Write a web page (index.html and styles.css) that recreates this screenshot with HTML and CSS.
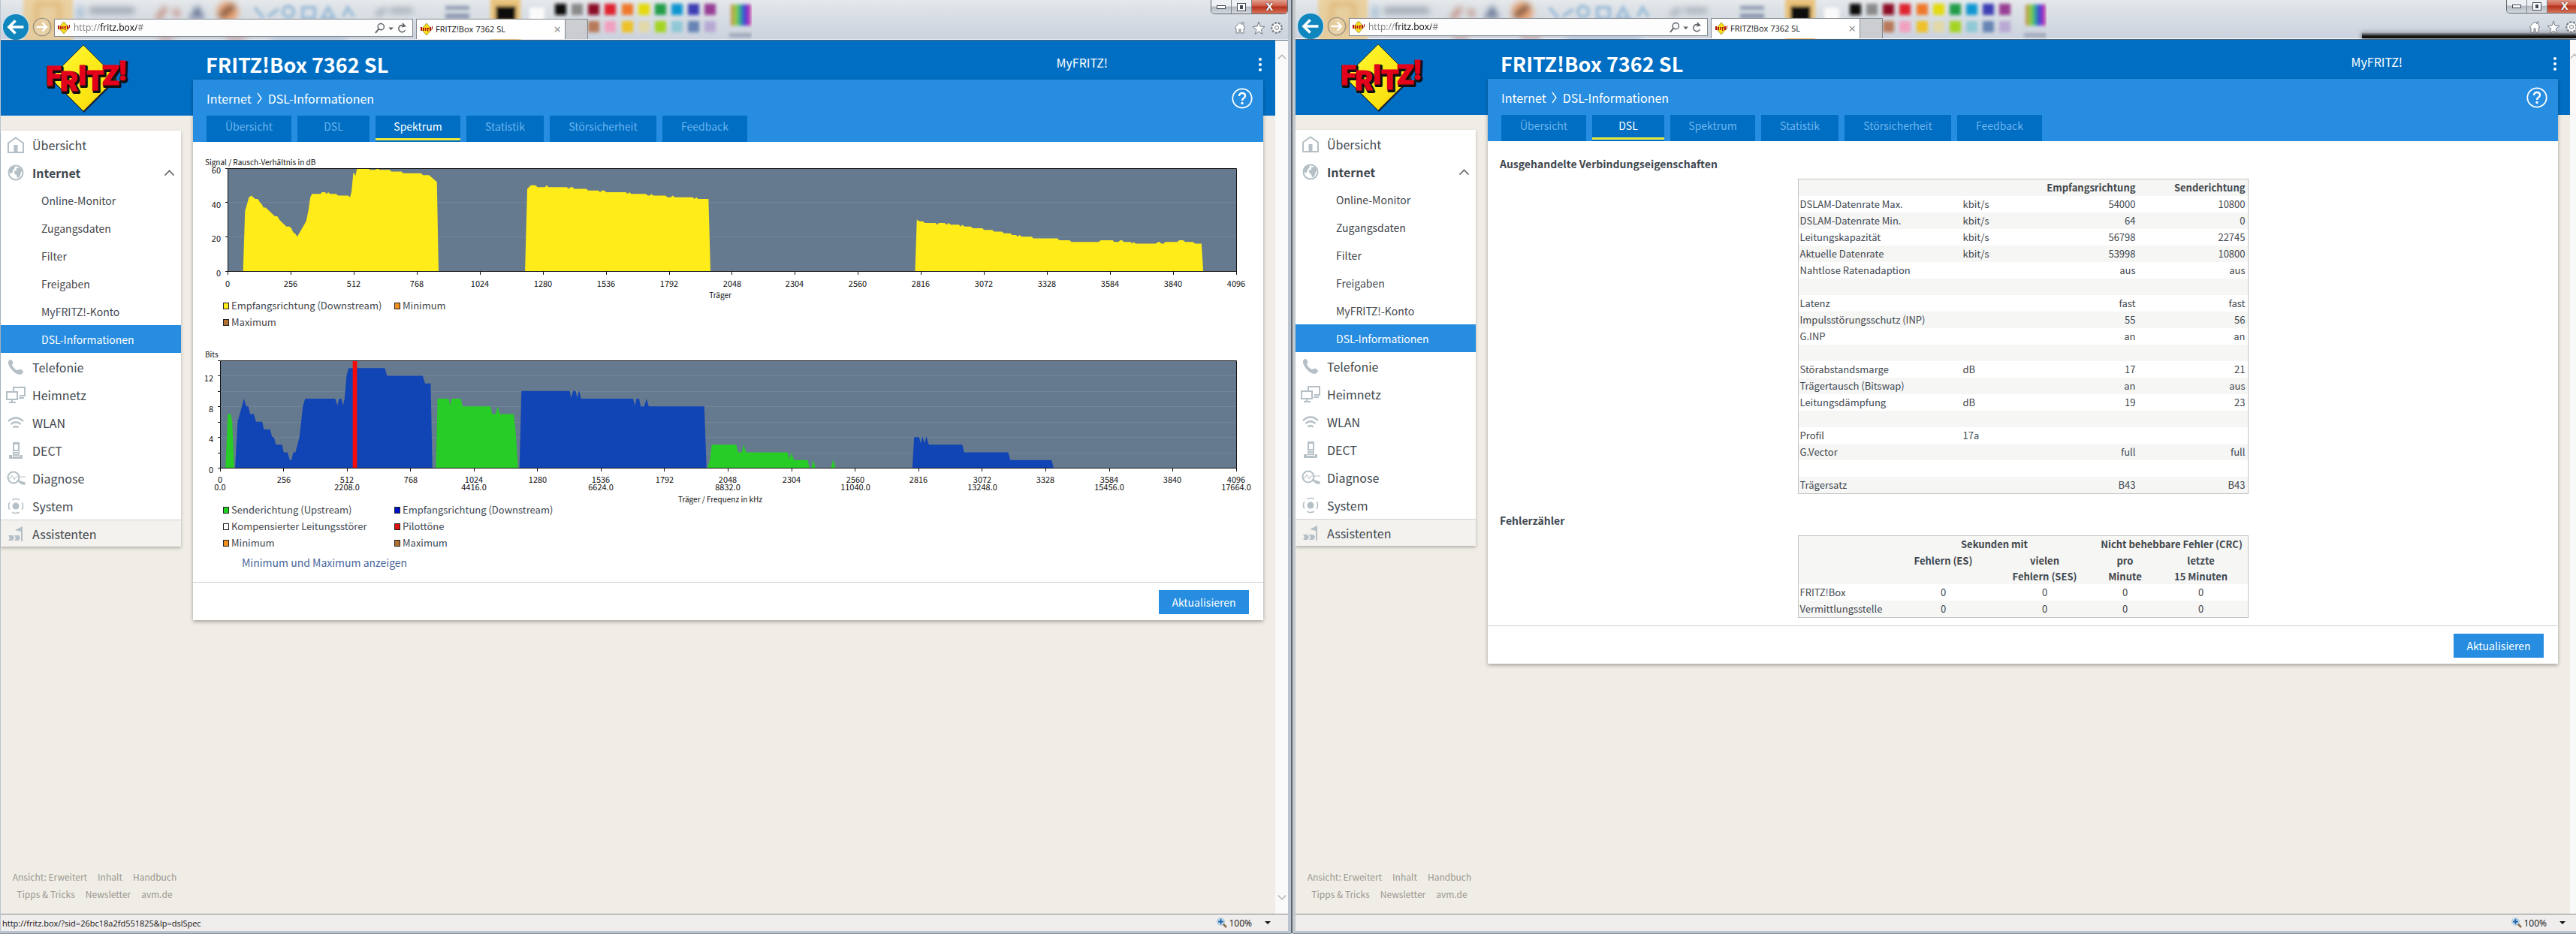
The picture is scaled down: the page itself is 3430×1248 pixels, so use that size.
FILE: index.html
```html
<!DOCTYPE html>
<html lang="de">
<head>
<meta charset="utf-8">
<title>FRITZ!Box 7362 SL</title>
<link rel="stylesheet" href="styles.css">
</head>
<body>
<svg class="defs" aria-hidden="true">
  <defs>
    <linearGradient id="gold" x1="0" y1="0" x2="1" y2="1"><stop offset="0" stop-color="#fff9a0"/><stop offset=".3" stop-color="#fdf023"/><stop offset=".7" stop-color="#fbe312"/><stop offset="1" stop-color="#f0a31a"/></linearGradient>
    <linearGradient id="rainbow"><stop offset="0" stop-color="#d08a50"/><stop offset=".25" stop-color="#8fd040"/><stop offset=".45" stop-color="#30b090"/><stop offset=".7" stop-color="#4038e0"/><stop offset="1" stop-color="#e040a0"/></linearGradient>
    <filter id="soft" x="-10%" y="-50%" width="120%" height="200%"><feGaussianBlur stdDeviation="2"/></filter>
    <filter id="softer" x="-10%" y="-50%" width="120%" height="200%"><feGaussianBlur stdDeviation="4"/></filter>
  </defs>
  <symbol id="i-fav" viewBox="0 0 16 16"><path d="M8 0 15 8 8 16 1 8Z" fill="#f8e01c" stroke="#7a6410" stroke-width=".6"/><path d="M0 5h2v5H0zM3 6h2v4H3zM6 6h1.500v4H6zM8.500 6h2.500v1.500h-.7V11H9V7.500h-.5zM12 5h2v5h-2zM15 4h1v4h-1z" fill="#b3121a"/></symbol>
  <symbol id="i-house" viewBox="0 0 28 24"><path d="M4 22V9.500L14 2.500 24 9.500V22Z" fill="none" stroke="#b4c0c6" stroke-width="2"/><path d="M11.500 12h5v9h-5z" fill="#b4c0c6"/></symbol>
  <symbol id="i-globe" viewBox="0 0 28 24"><circle cx="14" cy="12" r="9.500" fill="none" stroke="#b4c0c6" stroke-width="2"/><path d="M6 5c3-2 6-2 7 0-1 3-3 3-3 5s-2 2-2 4l-3-3c0-2 0-4 1-6M15 6l5-1 3 5c-1 1-2 0-2 2l-2 6-3 1c-1-3 0-4-3-5-2-3-1-5 2-5z" fill="#b4c0c6"/></symbol>
  <symbol id="i-phone" viewBox="0 0 28 24"><path d="M5 3c2-2 4-1 5 2s-1 3-1 4c1 3 4 6 7 7 2 0 2-2 5-1 3 2 4 3 2 5-3 4-9 1-13-3S2 6 5 3Z" fill="#b4c0c6"/></symbol>
  <symbol id="i-net" viewBox="0 0 28 24"><path d="M11 7V2h15v11h-7M18 16h7M2 8h14v10H2zM9 18v4M5 22h9" fill="none" stroke="#b4c0c6" stroke-width="2"/></symbol>
  <symbol id="i-wlan" viewBox="0 0 28 24"><path d="M4 10q10-9 20 0M7.500 14q6.500-5.500 13 0M10.500 18.500q3.500-3 7 0" fill="none" stroke="#b4c0c6" stroke-width="2.400"/></symbol>
  <symbol id="i-dect" viewBox="0 0 28 24"><path d="M10 1h9v21h-9z" fill="#b4c0c6"/><path d="M12 4h5v7h-5zM11 13h7v1h-7zM11 16h7v1h-7zM11 19h7v1h-7z" fill="#fff"/><path d="M5 18h4v3h11v-3h3v5H5z" fill="#b4c0c6"/></symbol>
  <symbol id="i-diag" viewBox="0 0 28 24"><circle cx="11" cy="11" r="7.500" fill="none" stroke="#b4c0c6" stroke-width="2"/><path d="M4 12h3l2-4 3 6 2-4h13" fill="none" stroke="#b4c0c6"/><path d="m16 15 10 3v2l-4-.5z" fill="#b4c0c6" stroke="#b4c0c6" stroke-width="1.500"/></symbol>
  <symbol id="i-sys" viewBox="0 0 28 24"><circle cx="14" cy="12" r="4.500" fill="#b4c0c6"/><circle cx="14" cy="12" r="9.500" fill="none" stroke="#b4c0c6" stroke-width="1.600" stroke-dasharray="9.900 5" stroke-dashoffset="5"/></symbol>
  <symbol id="i-wiz" viewBox="0 0 28 24"><path d="M23 2v20h-2V9l-8-2zM4 14h6l2 3-2 4H4l2-3zM12 14h6l2 3-2 4h-6l2-3z" fill="#b4c0c6"/></symbol>
  <symbol id="i-help" viewBox="0 0 28 28"><circle cx="14" cy="14" r="12.700" fill="none" stroke="#fff" stroke-width="1.800"/><path d="M10 11q0-4 4-4t4 3.600q0 2-2 3.200t-2 3.200" fill="none" stroke="#fff" stroke-width="2.400"/><circle cx="14" cy="20.500" r="1.700" fill="#fff"/></symbol>
  <symbol id="i-back" viewBox="0 0 40 40"><circle cx="20" cy="20" r="18.500" fill="#0f86bd" stroke="#e4eef4"/><path d="M31 20H11M19.500 11 10.500 20l9 9" fill="none" stroke="#fff" stroke-width="3.800"/></symbol>
  <symbol id="i-fwd" viewBox="0 0 28 28"><circle cx="14" cy="14" r="12.500" fill="#fff" fill-opacity=".15" stroke="#9b927f" stroke-width="1.500"/><path d="M6 14h14M14.500 8l6 6-6 6" fill="none" stroke="#fff" stroke-width="2.600"/></symbol>
  <symbol id="i-search" viewBox="0 0 50 16"><circle cx="9" cy="6" r="4.500" fill="none" stroke="#5c6065" stroke-width="1.500"/><path d="m6 9-5 6" stroke="#5c6065" stroke-width="2"/><path d="M20 7h7l-3.500 4z" fill="#5c6065"/><path d="M43 5a5 5 0 1 0 1 6M40 1l4 4-5 1" fill="none" stroke="#5c6065" stroke-width="1.600"/></symbol>
  <symbol id="i-tools" viewBox="0 0 66 18"><g fill="#fff" stroke="#777d85"><path d="m1 9 7-7 3 3V2h2v5l2 2-2 1v6H9v-5H7v5H3v-6z"/><path d="m33 1 2 6 6 .5-5 4 2 6-5-3.500-5 3.500 2-6-5-4 6-.5z"/><circle cx="57" cy="9" r="6.500" stroke-dasharray="3 1.500" stroke-width="2.500"/><circle cx="57" cy="9" r="5" stroke="#fff"/><circle cx="57" cy="9" r="2.500"/></g></symbol>
  <symbol id="i-up" viewBox="0 0 14 8"><path d="M1 7.500 7 1.500l6 6" fill="none" stroke="currentColor" stroke-width="1.700"/></symbol>
  <symbol id="i-zoom" viewBox="0 0 14 14"><path d="m8 8 5 5" stroke="#8a6a48" stroke-width="2.500"/><circle cx="5.500" cy="5.500" r="4.700" fill="#d8ecfa" stroke="#8fb0cc"/><path d="M5.500 2v7M2 5.500h7" stroke="#1d5fa8" stroke-width="2"/></symbol>
  <symbol id="i-glass" viewBox="0 0 1000 54">
    <path filter="url(#soft)" d="M30-4h66v62H30z" fill="#ecc98a" fill-opacity=".75"/>
    <g filter="url(#softer)">
      <path d="M48 5h30v30H48z" fill="none" stroke="#d9ae68" stroke-width="4"/>
      <path d="M104 8h4v16h-4z" fill="#7aa0c8"/><path d="M118 14h60" stroke="#9aa1ad" stroke-width="8"/>
      <path d="m208 26 12-16M232 12l4 10" stroke="#c08070" stroke-width="6"/><path d="m254 26 8-14 6 14" fill="none" stroke="#4a5a80" stroke-width="5"/>
      <circle cx="302" cy="16" r="14" fill="#e7a070"/><path d="m292 22 18-14" stroke="#4a3434" stroke-width="7"/>
      <path d="m500 20 12-8M518 14h30" stroke="#9aa1ad" stroke-width="6"/>
      <path d="M210 50h20M300 50h26" stroke="#c09898" stroke-width="6"/><path d="M360 50h100" stroke="#a4bed8" stroke-width="6"/>
    </g>
    <g filter="url(#soft)">
      <path d="m338 10 12 14M356 22l14-10M376 14a7 7 0 1 0 14 3 7 7 0 1 0-14-3M402 10h16v14h-16zM428 24l8-14 8 14zM456 22l6-12 8 12" fill="none" stroke="#9cbcd8" stroke-width="4"/>
      <path d="M592 8h32v5h-32zM592 18h32v7h-32z" fill="#8d9ab2"/>
      <path d="M652-2h40v58h-40z" fill="#eac37c"/><path d="M659 8h27v20h-27z" fill="#111"/><path d="M704 10h20v24h-20z" fill="#fafafa"/>
      <path d="M738 5h15v15h-15z" fill="#0c0c0c"/><path d="M760 5h15v15h-15z" fill="#8a8a8a"/><path d="M782 5h15v15h-15z" fill="#8b0f25"/><path d="M804 5h15v15h-15z" fill="#e0242e"/><path d="M827 5h15v15h-15z" fill="#f0782a"/><path d="M849 5h15v15h-15z" fill="#e4da10"/><path d="M871 5h15v15h-15z" fill="#229c48"/><path d="M893 5h15v15h-15z" fill="#0c96d2"/><path d="M915 5h15v15h-15z" fill="#3c3cb4"/><path d="M937 5h15v15h-15z" fill="#983c94"/>
      <path d="M782 28h15v15h-15z" fill="#b8795a"/><path d="M804 28h15v15h-15z" fill="#f2a0c0"/><path d="M827 28h15v15h-15z" fill="#efc125"/><path d="M849 28h15v15h-15z" fill="#e2d8a8"/><path d="M871 28h15v15h-15z" fill="#a4d420"/><path d="M893 28h15v15h-15z" fill="#90c8d6"/><path d="M915 28h15v15h-15z" fill="#6684b4"/><path d="M937 28h15v15h-15z" fill="#b8a8d4"/>
      <path d="M972 6h27v28h-27z" fill="url(#rainbow)"/><path d="M970 47h30" stroke="#98a2b4" stroke-width="5"/>
    </g>
  </symbol>
</svg>

<div class="desktop">
<section class="window">
  <header class="chrome">
    <svg class="glass" aria-hidden="true"><use href="#i-glass"/></svg>
    <button class="nav-back" aria-label="Zurück"><svg width="38" height="38"><use href="#i-back"/></svg></button>
    <button class="nav-fwd" aria-label="Vorwärts"><svg width="26" height="26"><use href="#i-fwd"/></svg></button>
    <label class="address"><svg width="16" height="16"><use href="#i-fav"/></svg><input type="text" value="http://fritz.box/#" aria-label="Adresse"><svg width="46" height="15"><use href="#i-search"/></svg></label>
    <div class="browser-tab"><svg width="16" height="16"><use href="#i-fav"/></svg><span>FRITZ!Box 7362 SL</span><button aria-label="Tab schließen">×</button></div>
    <div class="new-tab"></div>
    <div class="right-tools">
      <div class="caption"><button aria-label="Minimieren"><i class="min"></i></button><button aria-label="Maximieren"><i class="max"></i></button><button class="close" aria-label="Schließen">X</button></div>
      <svg width="66" height="18"><use href="#i-tools"/></svg>
    </div>
  </header>
  <div class="viewport">
    <div class="page">
      <aside>
        <div class="logo">
          <svg width="116" height="92" viewBox="0 0 116 92">
            <path d="M53 3 97 47 53 91 9 47Z" fill="#17233f"/>
            <path d="M52 1 96 45 52 89 8 45Z" fill="url(#gold)" stroke="#3c3a10"/>
            <text class="logo-shadow"><tspan x="4" y="57">F</tspan><tspan x="23" y="64">R</tspan><tspan x="47" y="56">I</tspan><tspan x="58" y="63">T</tspan><tspan x="79" y="56">Z</tspan><tspan x="101" y="50">!</tspan></text>
            <text class="logo-word"><tspan x="2" y="55">F</tspan><tspan x="21" y="62">R</tspan><tspan x="45" y="54">I</tspan><tspan x="56" y="61">T</tspan><tspan x="77" y="54">Z</tspan><tspan x="99" y="48">!</tspan></text>
          </svg>
        </div>
        <nav>
          <a class="main" href="#"><svg><use href="#i-house"/></svg>Übersicht</a>
          <a class="main open" href="#"><svg><use href="#i-globe"/></svg>Internet<svg class="chev"><use href="#i-up"/></svg></a>
          <a href="#">Online-Monitor</a>
          <a href="#">Zugangsdaten</a>
          <a href="#">Filter</a>
          <a href="#">Freigaben</a>
          <a href="#">MyFRITZ!-Konto</a>
          <a class="current" href="#">DSL-Informationen</a>
          <a class="main" href="#"><svg><use href="#i-phone"/></svg>Telefonie</a>
          <a class="main" href="#"><svg><use href="#i-net"/></svg>Heimnetz</a>
          <a class="main" href="#"><svg><use href="#i-wlan"/></svg>WLAN</a>
          <a class="main" href="#"><svg><use href="#i-dect"/></svg>DECT</a>
          <a class="main" href="#"><svg><use href="#i-diag"/></svg>Diagnose</a>
          <a class="main" href="#"><svg><use href="#i-sys"/></svg>System</a>
          <a class="main wizard" href="#"><svg><use href="#i-wiz"/></svg>Assistenten</a>
        </nav>
        <footer><div><a href="#">Ansicht: Erweitert</a><a href="#">Inhalt</a><a href="#">Handbuch</a></div><div><a href="#">Tipps &amp; Tricks</a><a href="#">Newsletter</a><a href="#">avm.de</a></div></footer>
      </aside>
      <main>
        <div class="titlebar"><h1>FRITZ!Box 7362 SL</h1><a href="#">MyFRITZ!</a><button class="dots" aria-label="Menü"><i></i><i></i><i></i></button></div>
        <div class="card">
          <div class="bluehead">
            <div class="crumbs"><a href="#">Internet</a><svg width="8" height="16" viewBox="0 0 8 16"><path d="m1 1 5 7-5 7" fill="none" stroke="#fff" stroke-width="1.300"/></svg><a href="#">DSL-Informationen</a><button class="help" aria-label="Hilfe"><svg width="28" height="28"><use href="#i-help"/></svg></button></div>
            <div class="tabs"><a href="#">Übersicht</a><a href="#">DSL</a><a class="on" href="#">Spektrum</a><a href="#">Statistik</a><a href="#">Störsicherheit</a><a href="#">Feedback</a></div>
          </div>
          <div class="charts">
            <svg class="chart" viewBox="0 0 1393 190">
              <path d="M30 18H1373V155H30Z" fill="#657a8e"/>
              <path d="M30 63.500H1373M30 109.500H1373" stroke="#71869a"/>
              <g transform="translate(30 155) scale(.3279 -2.283)" fill="#ffec18">
                <path d="M63 0 71 35 87 43 97 44 112 42 123 42 132 40 139 39 146 37 155 37 192 32 202 32 213 29.500 239 26 251 26 259 25 267 22.500 274 22 283 20 295 23 319 29 328 35 336 43 343 45 377 45 384 46 396 46 402 45 409 46 416 45 441 45 449 44 490 44 497 43 503 46 511 57.500 514 57 519 55.500 526 60 574 60 577 59 601 59 609 60 617 59 658 59 665 58 706 58 713 57 785 57 794 56 818 56 850 52 857 0Z"/>
                <path d="M1208 0 1217 48 1232 50 1250 50 1259 49 1289 49 1296 50 1303 49 1378 49 1385 48 1393 49 1401 49 1408 48 1457 48 1464 47 1506 47 1513 46 1520 47 1530 47 1537 46 1618 46 1625 45 1632 46 1639 45 1698 45 1707 44 1714 44 1721 45 1728 44 1778 44 1786 43 1800 43 1807 44 1816 43 1889 43 1896 42 1904 43 1911 42 1953 42 1961 0Z"/>
                <path d="M2792 0 2799 30 2809 29 2823 29 2832 28 2875 28 2881 27 2888 28 2912 28 2920 27 2928 28 2936 27 2970 27 2977 26 2984 27 2992 26 3018 26 3026 25 3065 25 3072 24 3105 24 3114 23 3144 23 3153 22 3179 22 3186 21 3202 21 3209 20 3216 21 3225 20 3265 20 3272 19 3369 19 3378 18 3419 18 3427 17 3537 17 3546 18 3594 18 3601 17 3618 17 3625 18 3632 18 3640 17 3667 17 3673 16 3680 17 3687 16 3769 16 3779 17 3785 17 3792 16 3801 16 3808 17 3857 17 3864 18 3880 18 3889 17 3920 17 3929 16 3955 16 3962 0Z"/>
              </g>
              <path d="M30.500 18.500H1373.500V155.500H30.500ZM27 18.500h3M27 63.500h3M27 109.500h3M27 155.500h3M30.500 155v5M114.500 155v5M198.500 155v5M282.500 155v5M366.500 155v5M450.500 155v5M534.500 155v5M618.500 155v5M701.500 155v5M785.500 155v5M869.500 155v5M953.500 155v5M1037.500 155v5M1121.500 155v5M1205.500 155v5M1289.500 155v5M1373.500 155v5" fill="none" stroke="#111"/>
              <text class="axis" x="0" y="14">Signal / Rausch-Verhältnis in dB</text>
              <g class="end"><text x="21" y="25">60</text><text x="21" y="71">40</text><text x="21" y="116">20</text><text x="21" y="162">0</text></g>
              <g class="mid"><text x="30" y="176">0</text><text x="114" y="176">256</text><text x="198" y="176">512</text><text x="282" y="176">768</text><text x="366" y="176">1024</text><text x="450" y="176">1280</text><text x="534" y="176">1536</text><text x="618" y="176">1792</text><text x="702" y="176">2048</text><text x="785" y="176">2304</text><text x="869" y="176">2560</text><text x="953" y="176">2816</text><text x="1037" y="176">3072</text><text x="1121" y="176">3328</text><text x="1205" y="176">3584</text><text x="1289" y="176">3840</text><text x="1373" y="176">4096</text><text class="axis" x="686" y="191">Träger</text></g>
            </svg>
            <ul class="legend"><li class="k-yellow">Empfangsrichtung (Downstream)</li><li class="k-orange">Minimum</li><li class="k-brown">Maximum</li></ul>
            <svg class="chart second" viewBox="0 0 1393 205">
              <path d="M20 17H1373V160H20Z" fill="#657a8e"/>
              <path d="M20 37.500H1373M20 58.500H1373M20 78.500H1373M20 99.500H1373M20 119.500H1373M20 140.500H1373" stroke="#71869a"/>
              <g transform="translate(20 160) scale(.3303 -10.214)">
                <path fill="#28cc26" d="M22 0 31 7 43 7 49 6 57 0ZM870 0 877 9 922 9 927 8.100 934 9 970 9 977 8 1090 8 1097 7 1111 7 1120 8 1127 7 1184 7 1191 5 1201 0ZM1965 0 1975 1 1982 3 2081 3 2088 2 2103 2 2111 3 2120 2 2288 2 2295 1.100 2304 2 2313 1 2368 1 2376 0 2384 0 2391 1 2401 0 2463 0 2472 1.100 2481 0Z"/>
                <path fill="#1144b4" d="M61 0 71 6 88 8 96 9 106 8 114 8 121 7 136 7 145 6 170 6 177 5 202 5 210 4 217 4 225 3 250 3 257 2 272 2 281 1 288 1 295 2 304 2 320 4 334 8 343 9 464 9 473 8.100 480 9 489 9 496 8.100 502 9 510 12 518 13 664 13 673 12 817 12 826 11 849 11 856 0ZM1207 0 1215 10 1409 10 1416 9.100 1423 10 1433 10 1440 9.100 1448 10.100 1455 9 1665 9 1672 8.100 1679 9 1689 9 1696 8 1710 8 1719 9 1728 8 1952 8 1961 0ZM2791 0 2798 4 2818 4 2825 3.200 2831 4.100 2840 3.200 2847 4.100 2857 3 2992 3 3000 2 3177 2 3186 1 3352 1 3360 0Z"/>
                <path fill="#f80a0a" d="M535 0H552V14H535Z"/>
              </g>
              <path d="M20.500 17.500H1373.500V160.500H20.500ZM17 17.500h3M17 37.500h3M17 58.500h3M17 78.500h3M17 99.500h3M17 119.500h3M17 140.500h3M17 160.500h3M20.500 160v5M104.500 160v5M189.500 160v5M273.500 160v5M358.500 160v5M442.500 160v5M527.500 160v5M611.500 160v5M696.500 160v5M781.500 160v5M865.500 160v5M950.500 160v5M1034.500 160v5M1119.500 160v5M1204.500 160v5M1288.500 160v5M1373.500 160v5" fill="none" stroke="#111"/>
              <text class="axis" x="0" y="13">Bits</text>
              <g class="end"><text x="11" y="45">12</text><text x="11" y="86">8</text><text x="11" y="126">4</text><text x="11" y="167">0</text></g>
              <g class="mid"><text x="20" y="180">0</text><text x="105" y="180">256</text><text x="189" y="180">512</text><text x="274" y="180">768</text><text x="358" y="180">1024</text><text x="443" y="180">1280</text><text x="527" y="180">1536</text><text x="612" y="180">1792</text><text x="696" y="180">2048</text><text x="781" y="180">2304</text><text x="866" y="180">2560</text><text x="950" y="180">2816</text><text x="1035" y="180">3072</text><text x="1119" y="180">3328</text><text x="1204" y="180">3584</text><text x="1288" y="180">3840</text><text x="1373" y="180">4096</text>
              <text x="20" y="190">0.0</text><text x="189" y="190">2208.0</text><text x="358" y="190">4416.0</text><text x="527" y="190">6624.0</text><text x="696" y="190">8832.0</text><text x="866" y="190">11040.0</text><text x="1035" y="190">13248.0</text><text x="1204" y="190">15456.0</text><text x="1373" y="190">17664.0</text><text class="axis" x="686" y="206">Träger / Frequenz in kHz</text></g>
            </svg>
            <ul class="legend"><li class="k-green">Senderichtung (Upstream)</li><li class="k-blue">Empfangsrichtung (Downstream)</li><li class="k-white">Kompensierter Leitungsstörer</li><li class="k-red">Pilottöne</li><li class="k-orange">Minimum</li><li class="k-brown">Maximum</li></ul>
            <a class="minmax" href="#">Minimum und Maximum anzeigen</a>
          </div>
          <div class="actions"><button>Aktualisieren</button></div>
        </div>
      </main>
    </div>
    <div class="scroll"><svg><use href="#i-up"/></svg><svg class="down"><use href="#i-up"/></svg></div>
  </div>
  <footer class="status"><span>http://fritz.box/?sid=26bc18a2fd551825&amp;lp=dslSpec</span><button><svg width="14" height="14"><use href="#i-zoom"/></svg>100%<i></i></button></footer>
</section>

<section class="window two">
  <header class="chrome">
    <svg class="glass" aria-hidden="true"><use href="#i-glass"/></svg>
    <div class="shade"></div>
    <button class="nav-back" aria-label="Zurück"><svg width="38" height="38"><use href="#i-back"/></svg></button>
    <button class="nav-fwd" aria-label="Vorwärts"><svg width="26" height="26"><use href="#i-fwd"/></svg></button>
    <label class="address"><svg width="16" height="16"><use href="#i-fav"/></svg><input type="text" value="http://fritz.box/#" aria-label="Adresse"><svg width="46" height="15"><use href="#i-search"/></svg></label>
    <div class="browser-tab"><svg width="16" height="16"><use href="#i-fav"/></svg><span>FRITZ!Box 7362 SL</span><button aria-label="Tab schließen">×</button></div>
    <div class="new-tab"></div>
    <div class="right-tools">
      <div class="caption"><button aria-label="Minimieren"><i class="min"></i></button><button aria-label="Maximieren"><i class="max"></i></button><button class="close" aria-label="Schließen">X</button></div>
      <svg width="66" height="18"><use href="#i-tools"/></svg>
    </div>
  </header>
  <div class="viewport">
    <div class="page">
      <aside>
        <div class="logo">
          <svg width="116" height="92" viewBox="0 0 116 92">
            <path d="M53 3 97 47 53 91 9 47Z" fill="#17233f"/>
            <path d="M52 1 96 45 52 89 8 45Z" fill="url(#gold)" stroke="#3c3a10"/>
            <text class="logo-shadow"><tspan x="4" y="57">F</tspan><tspan x="23" y="64">R</tspan><tspan x="47" y="56">I</tspan><tspan x="58" y="63">T</tspan><tspan x="79" y="56">Z</tspan><tspan x="101" y="50">!</tspan></text>
            <text class="logo-word"><tspan x="2" y="55">F</tspan><tspan x="21" y="62">R</tspan><tspan x="45" y="54">I</tspan><tspan x="56" y="61">T</tspan><tspan x="77" y="54">Z</tspan><tspan x="99" y="48">!</tspan></text>
          </svg>
        </div>
        <nav>
          <a class="main" href="#"><svg><use href="#i-house"/></svg>Übersicht</a>
          <a class="main open" href="#"><svg><use href="#i-globe"/></svg>Internet<svg class="chev"><use href="#i-up"/></svg></a>
          <a href="#">Online-Monitor</a>
          <a href="#">Zugangsdaten</a>
          <a href="#">Filter</a>
          <a href="#">Freigaben</a>
          <a href="#">MyFRITZ!-Konto</a>
          <a class="current" href="#">DSL-Informationen</a>
          <a class="main" href="#"><svg><use href="#i-phone"/></svg>Telefonie</a>
          <a class="main" href="#"><svg><use href="#i-net"/></svg>Heimnetz</a>
          <a class="main" href="#"><svg><use href="#i-wlan"/></svg>WLAN</a>
          <a class="main" href="#"><svg><use href="#i-dect"/></svg>DECT</a>
          <a class="main" href="#"><svg><use href="#i-diag"/></svg>Diagnose</a>
          <a class="main" href="#"><svg><use href="#i-sys"/></svg>System</a>
          <a class="main wizard" href="#"><svg><use href="#i-wiz"/></svg>Assistenten</a>
        </nav>
        <footer><div><a href="#">Ansicht: Erweitert</a><a href="#">Inhalt</a><a href="#">Handbuch</a></div><div><a href="#">Tipps &amp; Tricks</a><a href="#">Newsletter</a><a href="#">avm.de</a></div></footer>
      </aside>
      <main>
        <div class="titlebar"><h1>FRITZ!Box 7362 SL</h1><a href="#">MyFRITZ!</a><button class="dots" aria-label="Menü"><i></i><i></i><i></i></button></div>
        <div class="card">
          <div class="bluehead">
            <div class="crumbs"><a href="#">Internet</a><svg width="8" height="16" viewBox="0 0 8 16"><path d="m1 1 5 7-5 7" fill="none" stroke="#fff" stroke-width="1.300"/></svg><a href="#">DSL-Informationen</a><button class="help" aria-label="Hilfe"><svg width="28" height="28"><use href="#i-help"/></svg></button></div>
            <div class="tabs"><a href="#">Übersicht</a><a class="on" href="#">DSL</a><a href="#">Spektrum</a><a href="#">Statistik</a><a href="#">Störsicherheit</a><a href="#">Feedback</a></div>
          </div>
          <div class="tables">
            <h2>Ausgehandelte Verbindungseigenschaften</h2>
            <table class="props">
              <colgroup><col class="c1"><col class="c2"><col class="c3"><col class="c4"></colgroup>
              <tr><th></th><th></th><th>Empfangsrichtung</th><th>Senderichtung</th></tr>
              <tr><td>DSLAM-Datenrate Max.</td><td>kbit/s</td><td>54000</td><td>10800</td></tr>
              <tr><td>DSLAM-Datenrate Min.</td><td>kbit/s</td><td>64</td><td>0</td></tr>
              <tr><td>Leitungskapazität</td><td>kbit/s</td><td>56798</td><td>22745</td></tr>
              <tr><td>Aktuelle Datenrate</td><td>kbit/s</td><td>53998</td><td>10800</td></tr>
              <tr><td>Nahtlose Ratenadaption</td><td></td><td>aus</td><td>aus</td></tr>
              <tr><td></td><td></td><td></td><td></td></tr>
              <tr><td>Latenz</td><td></td><td>fast</td><td>fast</td></tr>
              <tr><td>Impulsstörungsschutz (INP)</td><td></td><td>55</td><td>56</td></tr>
              <tr><td>G.INP</td><td></td><td>an</td><td>an</td></tr>
              <tr><td></td><td></td><td></td><td></td></tr>
              <tr><td>Störabstandsmarge</td><td>dB</td><td>17</td><td>21</td></tr>
              <tr><td>Trägertausch (Bitswap)</td><td></td><td>an</td><td>aus</td></tr>
              <tr><td>Leitungsdämpfung</td><td>dB</td><td>19</td><td>23</td></tr>
              <tr><td></td><td></td><td></td><td></td></tr>
              <tr><td>Profil</td><td>17a</td><td></td><td></td></tr>
              <tr><td>G.Vector</td><td></td><td>full</td><td>full</td></tr>
              <tr><td></td><td></td><td></td><td></td></tr>
              <tr><td>Trägersatz</td><td></td><td>B43</td><td>B43</td></tr>
            </table>
            <h2>Fehlerzähler</h2>
            <table class="errors">
              <colgroup><col class="e1"><col class="e2"><col class="e3"><col class="e4"><col></colgroup>
              <thead>
                <tr><th></th><th colspan="2">Sekunden mit</th><th colspan="2">Nicht behebbare Fehler (CRC)</th></tr>
                <tr class="two-line"><th></th><th>Fehlern (ES)</th><th>vielen<br>Fehlern (SES)</th><th>pro<br>Minute</th><th>letzte<br>15 Minuten</th></tr>
              </thead>
              <tbody>
                <tr><td>FRITZ!Box</td><td>0</td><td>0</td><td>0</td><td>0</td></tr>
                <tr><td>Vermittlungsstelle</td><td>0</td><td>0</td><td>0</td><td>0</td></tr>
              </tbody>
            </table>
          </div>
          <div class="actions"><button>Aktualisieren</button></div>
        </div>
      </main>
    </div>
    <div class="scroll"><svg><use href="#i-up"/></svg></div>
  </div>
  <footer class="status"><span></span><button><svg width="14" height="14"><use href="#i-zoom"/></svg>100%<i></i></button></footer>
</section>
</div>
</body>
</html>
```
FILE: styles.css
```css
* { box-sizing: border-box; }
body { margin: 0; background: #fff; color: #3f474e; font: 13px/22px "Noto Sans CJK JP", "Noto Sans", sans-serif; }
a { color: inherit; text-decoration: none; }
button { padding: 0; border: 0; background: none; font: inherit; color: inherit; }
h1, h2, ul { margin: 0; padding: 0; }
svg { flex: none; }
.defs { position: absolute; width: 0; height: 0; }

.desktop { display: grid; grid-template-columns: 1719fr 1709fr; gap: 2px; min-height: 100vh; padding-bottom: 5px; }
.window { display: flex; flex-direction: column; min-width: 0; border: solid #b9c4d0; border-width: 0 4px 3px 1px; box-shadow: 1px 0 #5f666e, 0 1px #8a929a; }
.window.two { border-width: 0 0 3px 4px; overflow: hidden; border-left-color: #c3c8cc; box-shadow: -1px 0 #5f666e, 0 1px #8a929a; }

/* browser chrome */
.chrome { position: relative; display: flex; align-items: flex-start; height: 54px; overflow: hidden; padding: 25px 0 0 1px; border-bottom: 1px solid #4d6278; background: linear-gradient(#e6e9ec, #dde2e6 20%, #cbd2de); box-shadow: inset 0 -1px #f4f8fc; font: 12px/22px "Open Sans", sans-serif; color: #111; }
.two .chrome { height: 53px; padding-top: 24px; }
.chrome > * { position: relative; }
.chrome > .glass { position: absolute; left: 0; top: 0; width: 1000px; height: 54px; }
.chrome > .shade { position: absolute; right: 0; bottom: 1px; width: 285px; height: 9px; background: linear-gradient(#0000, #111 70%); box-shadow: 0 2px 6px #0008; }
.nav-back { height: 38px; margin-top: -8px; }
.nav-fwd { height: 26px; margin: -2px 3px 0; }
.nav-back svg, .nav-fwd svg { display: block; }
.address { display: flex; align-items: center; gap: 5px; width: 478px; height: 24px; padding: 0 4px; border: 1px solid #84898f; background: #fffffff0; }
.address input { flex: 1; min-width: 0; padding: 0; border: 0; font: 12px/22px "Open Sans", sans-serif; color: transparent; background: linear-gradient(90deg, #777 0 35px, #000 35px 84px, #777 84px); background-clip: text; outline: 0; }
.browser-tab { display: flex; align-items: center; gap: 4px; width: 199px; height: 27px; margin-left: 4px; padding: 0 5px; border: 1px solid #84898f; border-bottom: 0; background: #fff; font-size: 11px; }
.browser-tab button { margin-left: auto; font-size: 17px; color: #888; }
.new-tab { width: 30px; height: 27px; border: 1px solid #84898f; border-width: 1px 1px 0 0; background: #c8c8c8a0; }
.right-tools { display: flex; flex-direction: column; justify-content: space-between; align-items: flex-end; height: 46px; margin: -25px 0 0 auto; }
.right-tools > svg { margin-right: 6px; }
.two .right-tools > svg { margin-right: -3px; }
.caption { display: flex; height: 19px; border: 1px solid #646a72; border-top: 0; border-radius: 0 0 5px 5px; overflow: hidden; }
.two .caption { border-right: 0; border-radius: 0 0 0 5px; }
.caption button { display: grid; place-items: center; width: 27px; border-right: 1px solid #80868c; background: linear-gradient(#eef1f4 45%, #b4bac2 50%, #d4d9df); }
.caption .close { width: 47px; border: 0; background: linear-gradient(#e0a090, #cf5a45 45%, #b5301c 50%, #d8745a); color: #fff; font-weight: 700; font-size: 14px; line-height: 18px; text-shadow: 0 0 2px #222; }
.two .caption .close { width: 38px; padding-left: 8px; }
.min { width: 12px; height: 5px; border: 1px solid #444a58; background: #fff; }
.max { width: 12px; height: 11px; border: 1px solid #444a58; background: #fff; outline: 2px solid #444a58; outline-offset: -6px; }

/* router page */
.viewport { flex: 1; display: flex; }
.page { flex: 1; min-width: 0; display: grid; grid-template-columns: 256px minmax(0, 1fr); padding-right: 16px; background: linear-gradient(#006fc3 100px, #f0ede6 100px); }
.scroll { display: flex; flex-direction: column; justify-content: space-between; align-items: center; width: 17px; padding: 17px 0; background: #f9f9f9; color: #b4b4b4; overflow: hidden; }
.scroll svg { width: 12px; height: 9px; }
.scroll .down { transform: rotate(180deg); }
.two .scroll { width: 8px; align-items: flex-start; }

aside { display: flex; flex-direction: column; }
.logo { height: 120px; padding: 5px 0 0 58px; }
.logo svg { display: block; overflow: visible; }
.logo text { font: 900 37px Roboto, sans-serif; stroke-linejoin: round; }
.logo-shadow { fill: #111; stroke: #111; stroke-width: 4px; }
.logo-word { fill: #e2001a; stroke: #e2001a; }
nav { width: 240px; background: #fff; box-shadow: 0 2px 4px #0004; }
nav a { display: flex; align-items: center; height: 37px; padding-left: 54px; font-size: 14px; line-height: 38px; }
nav .main { gap: 8px; padding-left: 6px; font-size: 16px; }
nav svg { width: 28px; height: 24px; }
nav .open { font-weight: 700; }
nav .chev { width: 15px; height: 8px; margin: 0 8px 0 auto; color: #666; }
nav .current { background: #268de1; color: #fff; }
nav .wizard { height: 36px; border-top: 1px solid #d0d2d2; background: #f4f2ee; }
aside footer { margin-top: auto; width: 250px; padding-bottom: 15px; color: #9a9890; font-size: 12px; line-height: 23px; }
aside footer div { display: flex; justify-content: center; gap: 14px; }

.titlebar { display: flex; align-items: flex-start; height: 52px; padding: 0 2px 0 17px; color: #fff; font-size: 16px; }
h1 { padding-top: 11px; font-size: 27px; line-height: 42px; }
.titlebar a { margin: 6px 201px 0 auto; line-height: 46px; }
.dots { display: flex; flex-direction: column; gap: 3px; margin-top: 23px; }
.dots i { width: 4px; height: 4px; border-radius: 2px; background: #fff; }
.card { background: #fff; box-shadow: 0 2px 5px #0005; }
.bluehead { background: #268de1; }
.crumbs { display: flex; align-items: center; gap: 7px; height: 48px; padding: 1px 14px 0 18px; color: #fff; font-size: 16px; line-height: 48px; }
.help { height: 28px; margin-left: auto; }
.help svg { display: block; }
.tabs { display: grid; grid-template-columns: 113px 96px 113px 103px 142px 113px; gap: 8px; padding-left: 18px; }
.tabs a { height: 35px; background: #006fc3; color: #6db3ee; font-size: 14px; line-height: 29px; text-align: center; }
.tabs .on { color: #fff; background: linear-gradient(#006fc3 30px, #ece83a 30px 33px, #006fc3 33px); }

.charts { padding: 17px 16px 11px; }
.chart { display: block; width: 100%; overflow: visible; font-size: 11px; fill: #111; }
.chart.second { margin-top: 23px; }
.axis { font-size: 10px; }
.end { text-anchor: end; }
.mid { text-anchor: middle; }
.legend { display: grid; grid-template-columns: 228px 1fr; padding-left: 25px; list-style: none; }
.legend li { display: flex; align-items: center; gap: 4px; white-space: nowrap; }
.legend li::before { content: ""; width: 6px; height: 7px; background: var(--k); outline: 1px solid #222; }
.k-yellow { --k: #ffec18; }
.k-orange { --k: #f09020; }
.k-brown { --k: #b07030; }
.k-green { --k: #20d020; }
.k-blue { --k: #0010c8; }
.k-white { --k: #fff; }
.k-red { --k: #e01010; }
.minmax { display: block; padding-left: 49px; color: #4a689c; font-size: 14px; line-height: 30px; }
.actions { display: flex; justify-content: flex-end; padding: 10px 19px 8px; border-top: 1px solid #cdd0d0; }
.actions button { width: 120px; height: 32px; background: #268de1; color: #fff; font-size: 14px; line-height: 32px; }

.tables { padding: 19px 16px 10px; }
h2 { font-size: 14px; line-height: 22px; }
table { width: 600px; margin: 9px auto 24px; border: 1px solid #c4c4c4; border-spacing: 0; table-layout: fixed; }
tr { height: 22px; }
td, th { padding: 0 3px 0 2px; line-height: 22px; text-align: left; vertical-align: top; white-space: nowrap; }
.c1 { width: 217px; } .c2 { width: 109px; } .c3 { width: 126px; } .c4 { width: 146px; }
.props tr:nth-child(odd), .errors thead, .errors tbody tr:nth-child(even) { background: #f6f6f5; }
.props td:nth-child(n+3), .props th { text-align: right; }
.errors { margin-bottom: 0; }
.e1 { width: 126px; } .e2 { width: 134px; } .e3 { width: 136px; } .e4 { width: 78px; }
.errors th, .errors td:nth-child(n+2) { padding: 0; text-align: center; }
.two-line th { line-height: 21px; }

.status { display: flex; justify-content: space-between; height: 23px; padding: 0 23px 0 2px; border-top: 1px solid #85858a; background: #f0eded; font: 11px/23px "Open Sans", sans-serif; color: #111; }
.two .status { padding-right: 14px; }
.status button { display: flex; align-items: center; gap: 2px; font-size: 12px; }
.status i { margin-left: 15px; border: solid transparent; border-width: 4px 4px 0; border-top-color: #111; }
```
